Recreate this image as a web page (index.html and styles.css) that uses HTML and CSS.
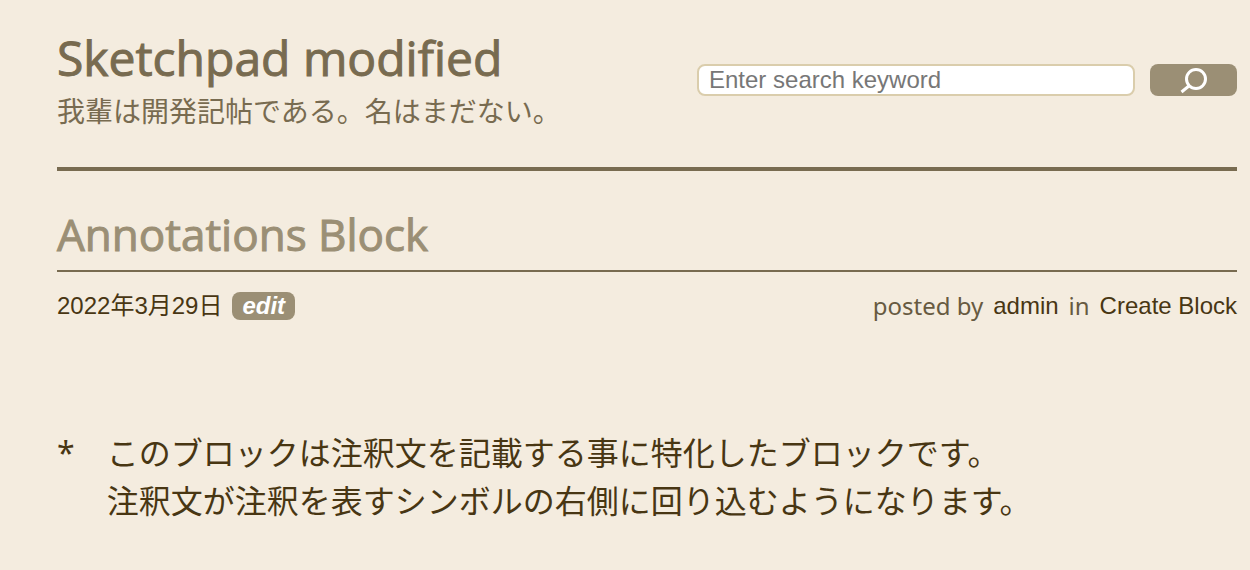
FILE: index.html
```html
<!DOCTYPE html>
<html lang="ja">
<head>
<meta charset="utf-8">
<title>Annotations Block | Sketchpad modified</title>
<link rel="stylesheet" href="styles.css">
</head>
<body>
<header class="site-header">
  <div class="branding">
    <h1 class="site-title">Sketchpad modified</h1>
    <p class="site-description">我輩は開発記帖である。名はまだない。</p>
  </div>
  <form class="search" role="search">
    <input class="search-field" type="search" aria-label="Search" placeholder="Enter search keyword">
    <button class="search-button" type="submit" aria-label="Submit search">
      <svg class="search-icon" viewBox="0 0 28 28" aria-hidden="true"><circle cx="16" cy="13" r="9.5"/><path d="M9.5 19.5 1.5 26"/></svg>
    </button>
  </form>
</header>
<main>
  <article>
    <h2 class="entry-title">Annotations Block</h2>
    <div class="entry-meta">
      <div class="meta-group"><a class="meta-link" href="#">2022年3月29日</a><a class="edit-link" href="#">edit</a></div>
      <div class="meta-group"><span class="meta-label">posted by</span><a class="meta-link" href="#">admin</a><span class="meta-label">in</span><a class="meta-link" href="#">Create Block</a></div>
    </div>
    <div class="annotation">
      <span class="annotation-symbol">*</span>
      <p class="annotation-text">このブロックは注釈文を記載する事に特化したブロックです。<br>注釈文が注釈を表すシンボルの右側に回り込むようになります。</p>
    </div>
  </article>
</main>
</body>
</html>
```
FILE: styles.css
```css
body {
  margin: 0;
  padding: 30px 13px 40px 57px;
  background: #f4ecdf;
  color: #483613;
  font-family: "Noto Sans", "Noto Sans CJK JP", sans-serif;
}
h1, h2, p { margin: 0; }
a { color: inherit; text-decoration: none; }

.site-header {
  display: flex;
  align-items: center;
  justify-content: space-between;
  padding-bottom: 37px;
  border-bottom: 4px solid #786b50;
  color: #786b50;
}
.site-title {
  font: 500 48px/56px "Open Sans", sans-serif;
  -webkit-text-stroke: 1px currentColor;
}
.site-description {
  margin-top: 6px;
  font-size: 28px;
  line-height: 38px;
}
.search {
  display: flex;
  gap: 15px;
}
.search-field {
  box-sizing: border-box;
  width: 438px;
  height: 32px;
  padding: 0 10px;
  border: 2px solid #dacdac;
  border-radius: 8px;
  background: #fff;
  font: 24px/28px "Liberation Sans", sans-serif;
  appearance: none;
}
.search-field::placeholder { color: #777; }
.search-button {
  display: flex;
  align-items: center;
  justify-content: center;
  width: 87px;
  height: 32px;
  padding: 0;
  border: 0;
  border-radius: 8px;
  background: #9b8f75;
}
.search-icon {
  width: 28px;
  height: 28px;
  fill: none;
  stroke: #fff;
  stroke-width: 3;
}

.entry-title {
  padding: 33px 0 6px;
  border-bottom: 2px solid #786b50;
  color: #9b8f75;
  font: 500 44px/60px "Open Sans", sans-serif;
  -webkit-text-stroke: 1px currentColor;
}
.entry-meta {
  display: flex;
  justify-content: space-between;
  padding-top: 18px;
}
.meta-group {
  display: flex;
  align-items: center;
  gap: 10px;
  font: 24px/32px "Liberation Sans", "Noto Sans CJK JP", sans-serif;
}
.meta-label {
  color: #675a41;
  font-family: "Noto Sans", sans-serif;
}
.edit-link {
  padding: 0 10px;
  border-radius: 8px;
  background: #9b8f75;
  color: #fff;
  font: italic bold 24px/28px "Liberation Sans", sans-serif;
}
.annotation {
  display: flex;
  gap: 32px;
  padding-top: 107px;
  font-size: 32px;
  line-height: 48px;
}
```
